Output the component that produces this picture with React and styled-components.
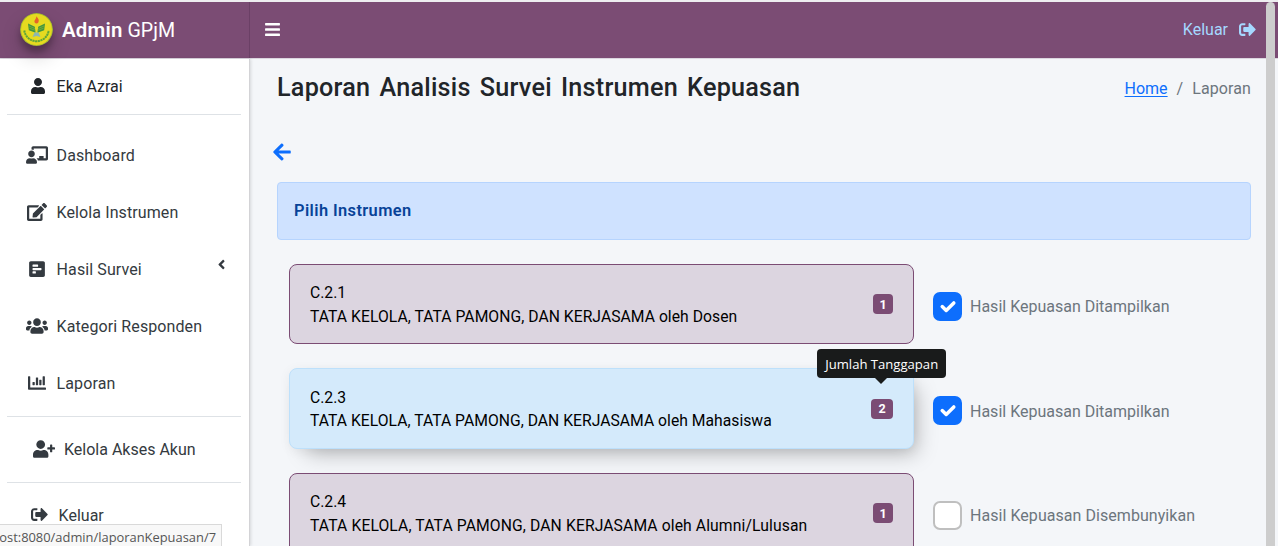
import React from "react";
import styled, { createGlobalStyle, css } from "styled-components";
import {
  FaUser, FaChalkboardTeacher, FaEdit, FaPollH, FaUsers, FaChartBar,
  FaUserPlus, FaSignOutAlt, FaAngleLeft, FaBars, FaArrowLeft,
} from "react-icons/fa";

const Global = createGlobalStyle`
  * { box-sizing: border-box; }
  body {
    margin: 0;
    overflow: hidden;
    background: #f4f6f9;
    font-family: Roboto, "Liberation Sans", sans-serif;
    font-size: 16px;
    color: #212529;
  }
`;

const Text = styled.span`
  white-space: nowrap;
  letter-spacing: ${(p) => p.$ls || 0}px;
`;

const Page = styled.div`
  position: relative;
  height: 546px;
  overflow: hidden;
  border-top: 2px solid #eeedf0;
  display: flex;
  flex-direction: column;
`;

const Header = styled.header`
  display: flex;
  flex: none;
  height: 57px;
  background: #7b4c74;
  border-bottom: 1px solid #dcd6df;
  color: #fff;
`;

const Brand = styled.div`
  display: flex;
  align-items: center;
  width: 250px;
  padding-left: 20px;
  border-right: 1px solid #6b4066;
  font-size: 20.4px;
`;

const Logo = styled.svg`
  position: relative;
  z-index: 2;
  width: 33px;
  height: 33px;
  margin: -2px 9px 0 0;
  border-radius: 50%;
  box-shadow: 0 10px 20px rgba(0, 0, 0, 0.19), 0 6px 6px rgba(0, 0, 0, 0.23);
`;

const BrandName = styled(Text)`
  font-weight: ${(p) => (p.$bold ? 600 : 400)};
  margin-right: ${(p) => (p.$bold ? 5 : 0)}px;
  ${(p) => !p.$bold && "font-size: 19.6px;"}
`;

const TopBar = styled.div`
  display: flex;
  flex: 1;
  align-items: center;
  justify-content: space-between;
  padding: 0 22px 1px 14px;
`;

const Logout = styled.a`
  display: flex;
  align-items: center;
  gap: 11px;
  color: #a5d8ff;
`;

const Body = styled.div`
  display: flex;
  flex: 1;
  min-height: 0;
`;

const Sidebar = styled.aside`
  width: 250px;
  flex: none;
  padding: 0 8px 0 7px;
  background: #fff;
  border-right: 1px solid #d3d3d6;
  box-shadow: 1px 0 3px rgba(0, 0, 0, 0.12);
`;

const Rule = styled.hr`
  height: 1px;
  margin: 0;
  border: 0;
  background: #dee2e6;
`;

const NavItem = styled.div`
  display: flex;
  align-items: center;
  height: ${(p) => p.$h || 57}px;
  padding-left: ${(p) => p.$indent || 18}px;
  color: ${(p) => (p.$dark ? "#212529" : "#343a40")};
`;

const NavIcon = styled.span`
  display: flex;
  justify-content: center;
  width: ${(p) => p.$w || 24}px;
  margin-right: ${(p) => p.$gap || 7.6}px;
  padding-bottom: 2px;
`;

const Chevron = styled(FaAngleLeft)`
  margin: 0 12px 11px auto;
`;

const NavList = styled.nav`
  padding: 12px 0 4px;
`;

const Main = styled.main`
  flex: 1;
  padding: 0 27px;
`;

const TitleRow = styled.div`
  display: flex;
  align-items: center;
  justify-content: space-between;
  height: 59px;
`;

const Title = styled.h1`
  margin: 0 0 2px;
  font-size: 25.2px;
  font-weight: 500;
  white-space: nowrap;
  letter-spacing: 0.23px;
  word-spacing: 2.7px;
`;

const Crumbs = styled.div`
  display: flex;
  gap: 9px;
  color: #6c757d;
  a { color: #0d6efd; text-decoration: underline; text-underline-offset: 2px; }
`;

const Back = styled.div`
  display: flex;
  align-items: center;
  height: 64px;
  margin-left: -5px;
  padding-top: 4px;
  color: #0d6efd;
`;

const Alert = styled.div`
  display: flex;
  align-items: center;
  height: 58px;
  padding: 0 0 1px 16px;
  background: #cfe2ff;
  border: 1px solid #b6d4fe;
  border-radius: 4px;
  color: #084298;
  font-size: 16.4px;
  font-weight: 600;
`;

const Rows = styled.div`
  display: grid;
  grid-auto-rows: 80.6px;
  gap: 24px;
  padding: 23.8px 0 0 12px;
`;

const Row = styled.div`
  display: grid;
  grid-template-columns: 625px 1fr;
  gap: 19px;
`;

const Card = styled.a`
  display: flex;
  align-items: center;
  justify-content: space-between;
  padding: 0 20px;
  border: 1px solid #7b4c74;
  border-radius: 8px;
  background: #dcd5e0;
  color: #000;
  ${(p) => p.$active && css`
    border-color: #bde0fb;
    background: #d4eafb;
    box-shadow: 10px 12px 20px -8px rgba(0, 0, 0, 0.27), 0 2px 12px rgba(0, 0, 0, 0.06);
  `}
`;

const CardText = styled.div`
  display: flex;
  flex-direction: column;
  padding-top: 1px;
  font-size: 15.7px;
  line-height: 23.4px;
`;

const Badge = styled.span`
  position: relative;
  display: flex;
  align-items: center;
  justify-content: center;
  min-width: 20px;
  height: 20px;
  padding: 0 ${(p) => (p.$wide ? 7.3 : 6)}px;
  border-radius: 4px;
  background: #7b4c74;
  color: #fff;
  font-size: 12.6px;
  font-weight: 700;
`;

const Tooltip = styled.span`
  position: absolute;
  left: -54px;
  bottom: 41px;
  width: 129px;
  height: 29px;
  border-radius: 4px;
  background: #191b1b;
  font: 400 13.1px/31px "Open Sans", sans-serif;
  text-align: center;
  white-space: nowrap;
  &::after {
    content: "";
    position: absolute;
    left: 58px;
    top: 29px;
    border: 6px solid transparent;
    border-top-color: #191b1b;
    border-bottom: 0;
  }
`;

const Toggle = styled.label`
  display: flex;
  align-items: center;
  gap: 8px;
  padding-top: 4px;
  color: #6c757d;
`;

const ToggleText = styled(Text)`
  padding-top: 1px;
`;

const Box = styled.span`
  display: flex;
  width: 29px;
  height: 29px;
  border: 2px solid ${(p) => (p.$on ? "#0d6efd" : "#bfbfbf")};
  border-radius: 7px;
  background: ${(p) => (p.$on ? "#0d6efd" : "#fff")};
`;

const ScrollThumb = styled.div`
  position: absolute;
  z-index: 3;
  top: 0;
  right: 3px;
  width: 9px;
  height: 600px;
  border-radius: 5px;
  background: #cdcdcd;
`;

const StatusUrl = styled.div`
  position: absolute;
  z-index: 4;
  left: 0;
  bottom: 0;
  display: flex;
  align-items: center;
  justify-content: flex-end;
  width: 222px;
  height: 22px;
  padding: 3px 5px 0 0;
  border: 1px solid #d9d9d9;
  border-left: 0;
  border-bottom: 0;
  background: #f8f8f8;
  color: #555;
  font: 12.9px "Open Sans", sans-serif;
`;

const Emblem = () => (
  <Logo viewBox="0 0 33 33">
    <circle cx="16.5" cy="16.5" r="16.5" fill="#a3bd2c" />
    <circle cx="16.5" cy="16.5" r="15.4" fill="#e6da20" />
    <path d="M4.300 17.500a12.300 12.300 0 0 0 24.400 0" fill="none" stroke="#5fa53a" strokeWidth="2" strokeDasharray="2.200 .5" />
    <path d="M16.500 3.200c1.800 2.600 3 3.600 1.800 6.200-.8 1.400-2.800 1.400-3.600 0-.9-2.200 1.400-3.200 1.800-6.200z" fill="#e5632a" />
    <path d="M8 10.500l6.800 3.200.8 6-6.800-2.400zM25 10.500l-6.800 3.200-.8 6 6.800-2.400z" fill="#42953f" />
    <path d="M9 13l6 2.600M9.400 15.200l6 2.200M24 13l-6 2.600M23.600 15.200l-6 2.200" stroke="#8fba38" strokeWidth=".6" />
    <path d="M12.500 24l2-4.400h4l2 4.400-4-1z" fill="#8bb6b3" />
  </Logo>
);

const Check = () => (
  <svg width="25" height="25" viewBox="0 0 25 25">
    <path d="M7.200 12.600l4 3.900L18.800 8.900" fill="none" stroke="#fff" strokeWidth="3.500" strokeLinecap="round" strokeLinejoin="round" />
  </svg>
);

const NAV = [
  { icon: FaChalkboardTeacher, size: 22, label: "Dashboard" },
  { icon: FaEdit, size: 20, label: "Kelola Instrumen" },
  { icon: FaPollH, size: 18, label: "Hasil Survei", sub: true },
  { icon: FaUsers, size: 22, label: "Kategori Responden" },
  { icon: FaChartBar, size: 18, label: "Laporan" },
];

const ITEMS = [
  { code: "C.2.1", text: "TATA KELOLA, TATA PAMONG, DAN KERJASAMA oleh Dosen", n: 1, on: true, ls: 0.04 },
  { code: "C.2.3", text: "TATA KELOLA, TATA PAMONG, DAN KERJASAMA oleh Mahasiswa", n: 2, on: true, ls: 0.02, active: true },
  { code: "C.2.4", text: "TATA KELOLA, TATA PAMONG, DAN KERJASAMA oleh Alumni/Lulusan", n: 1, on: false, ls: 0.11 },
];

export default function App() {
  return (
    <Page>
      <Global />
      <Header>
        <Brand>
          <Emblem />
          <BrandName $bold $ls={0.2}>Admin</BrandName>
          <BrandName>GPjM</BrandName>
        </Brand>
        <TopBar>
          <FaBars size={17} />
          <Logout><Text>Keluar</Text><FaSignOutAlt size={17} /></Logout>
        </TopBar>
      </Header>
      <Body>
        <Sidebar>
          <NavItem $h={55} $dark>
            <NavIcon $w={26} $gap={5.6}><FaUser size={16} /></NavIcon>
            <Text>Eka Azrai</Text>
          </NavItem>
          <Rule />
          <NavList>
            {NAV.map(({ icon: Icon, size, label, sub }) => (
              <NavItem key={label}>
                <NavIcon><Icon size={size} /></NavIcon>
                <Text $ls={0.1}>{label}</Text>
                {sub && <Chevron size={15} />}
              </NavItem>
            ))}
          </NavList>
          <Rule />
          <NavItem $h={65} $indent={25}>
            <NavIcon $gap={8}><FaUserPlus size={22} /></NavIcon>
            <Text>Kelola Akses Akun</Text>
          </NavItem>
          <Rule />
          <NavItem $h={65} $indent={20}>
            <NavIcon><FaSignOutAlt size={17} /></NavIcon>
            <Text>Keluar</Text>
          </NavItem>
        </Sidebar>
        <Main>
          <TitleRow>
            <Title>Laporan Analisis Survei Instrumen Kepuasan</Title>
            <Crumbs>
              <a><Text>Home</Text></a>
              <span>/</span>
              <Text $ls={0.1}>Laporan</Text>
            </Crumbs>
          </TitleRow>
          <Back><FaArrowLeft size={20} /></Back>
          <Alert><Text $ls={0.4}>Pilih Instrumen</Text></Alert>
          <Rows>
            {ITEMS.map((it) => (
              <Row key={it.code}>
                <Card $active={it.active}>
                  <CardText>
                    <Text>{it.code}</Text>
                    <Text $ls={it.ls}>{it.text}</Text>
                  </CardText>
                  <Badge $wide={it.active}>
                    {it.n}
                    {it.active && <Tooltip>Jumlah Tanggapan</Tooltip>}
                  </Badge>
                </Card>
                <Toggle>
                  <Box $on={it.on}>{it.on && <Check />}</Box>
                  <ToggleText $ls={it.on ? 0 : 0.05}>{it.on ? "Hasil Kepuasan Ditampilkan" : "Hasil Kepuasan Disembunyikan"}</ToggleText>
                </Toggle>
              </Row>
            ))}
          </Rows>
        </Main>
      </Body>
      <ScrollThumb />
      <StatusUrl><Text>ost:8080/admin/laporanKepuasan/7</Text></StatusUrl>
    </Page>
  );
}
